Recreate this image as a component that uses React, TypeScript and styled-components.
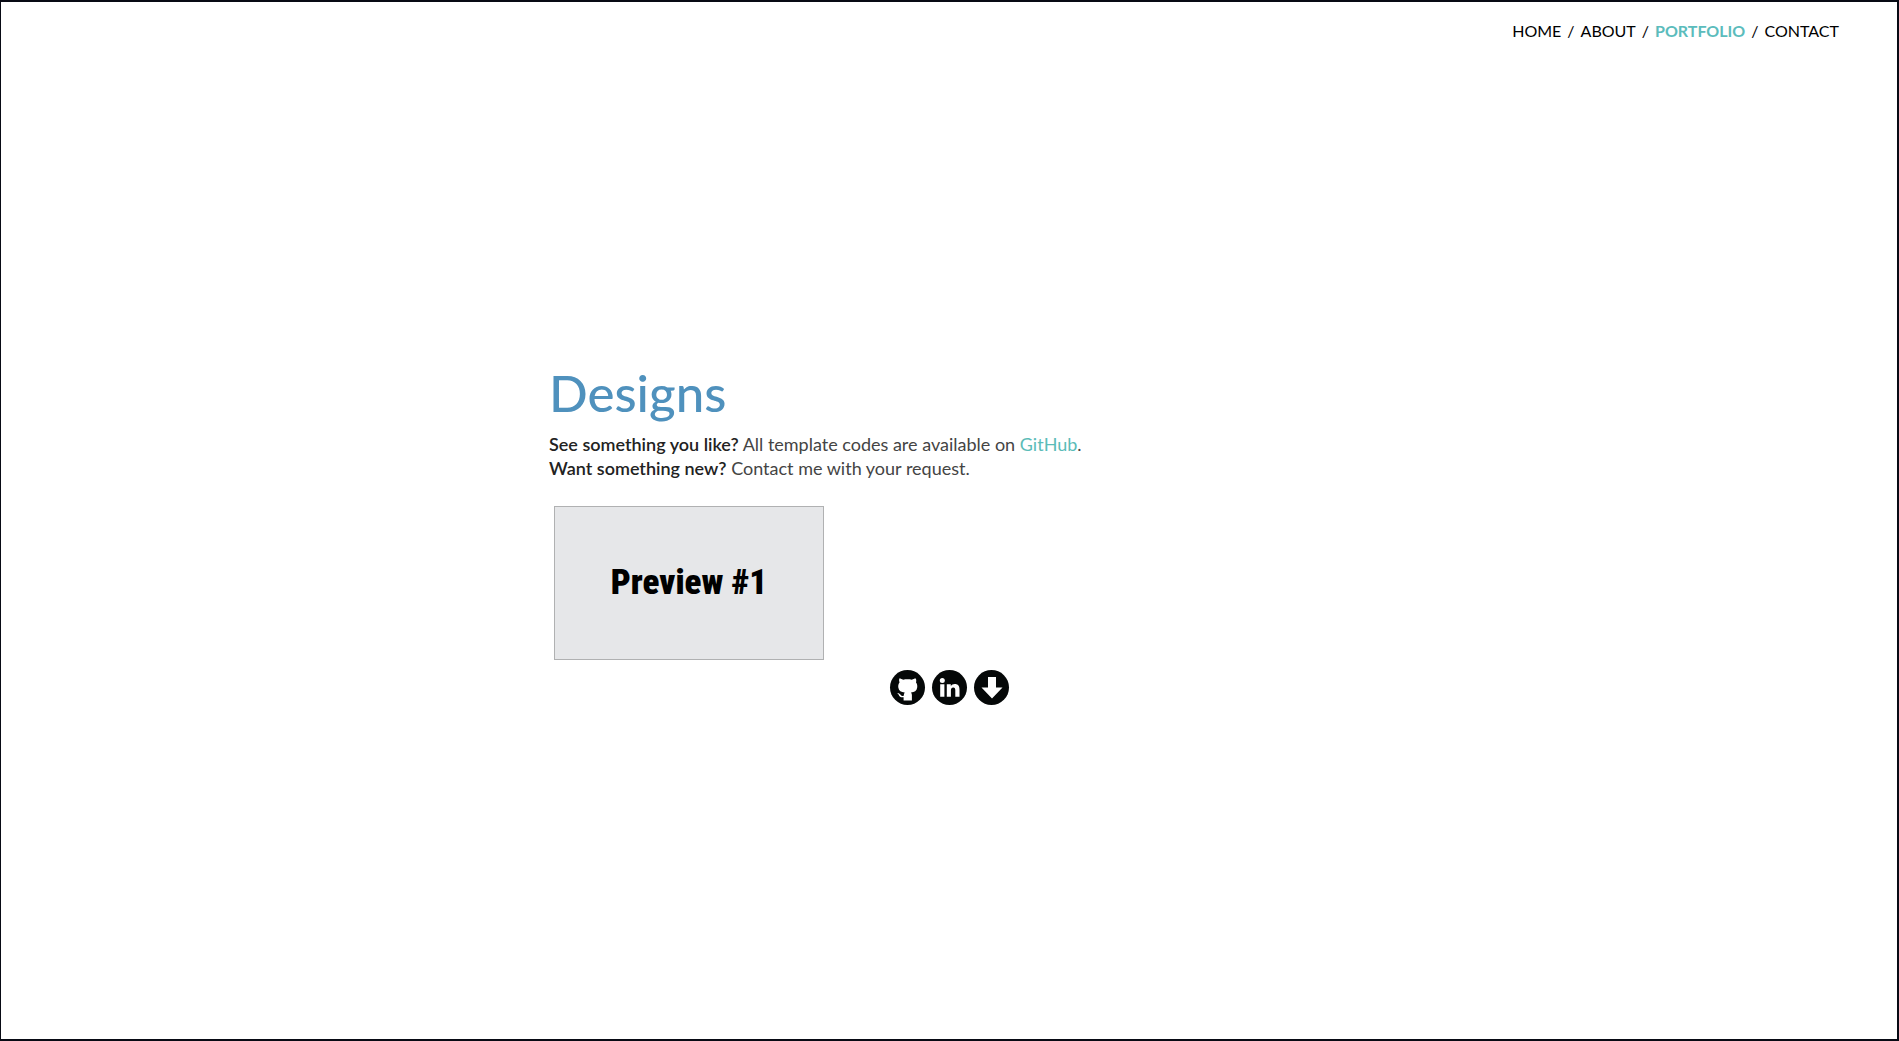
import React from "react";
import styled, { createGlobalStyle, css } from "styled-components";

const GlobalStyle = createGlobalStyle`
  *, *::before, *::after { box-sizing: border-box; }
  body {
    margin: 0;
    background: #fff;
    color: #444;
    font-family: Lato, "Liberation Sans", sans-serif;
    font-size: 18px;
    line-height: 24px;
  }
`;

const Page = styled.div`
  display: flex;
  flex-direction: column;
  min-height: 100vh;
  border: 2px solid #080a14;
  border-left-width: 1px;
`;

const Nav = styled.nav`
  display: flex;
  justify-content: flex-end;
  padding: 17px 58px 18px;
`;

const NavList = styled.ul`
  display: flex;
  margin: 0;
  padding: 0;
  list-style: none;
  color: #000;
  font-size: 16px;

  li + li::before {
    content: "/";
    padding: 0 6px;
  }
`;

const NavLink = styled.a<{ $active?: boolean }>`
  color: #000;
  text-decoration: none;
  ${(p) =>
    p.$active &&
    css`
      color: #5bbcbc;
      font-weight: 700;
    `}
`;

const Main = styled.main`
  display: flex;
  flex: 1;
  flex-direction: column;
  justify-content: center;
  width: 100%;
  max-width: 800px;
  margin: 0 auto;
  padding-bottom: 32px;
`;

const Title = styled.h1`
  margin: 0 0 10px;
  color: #4f91bd;
  font-size: 51px;
  font-weight: 500;
  line-height: 58px;
`;

const Intro = styled.p`
  margin: 0;
  font-weight: 400;
`;

const Lead = styled.strong`
  color: #222;
  font-weight: 600;
`;

const TextLink = styled.a`
  color: #5bbcb8;
  text-decoration: none;
`;

const Gallery = styled.div`
  display: flex;
  flex-wrap: wrap;
  gap: 10px;
  padding: 26px 5px 10px;
`;

const Preview = styled.a`
  display: flex;
  align-items: center;
  justify-content: center;
  width: 270px;
  height: 154px;
  border: 1px solid #b0b1b2;
  background: #e6e7e9;
  color: #000;
  font-family: "Roboto Condensed", Roboto, sans-serif;
  font-size: 35px;
  font-weight: 900;
  text-decoration: none;
`;

const Social = styled.footer`
  display: flex;
  justify-content: center;
  gap: 7px;
`;

const SocialLink = styled.a`
  display: block;
  width: 35px;
  height: 35px;
  border-radius: 50%;
  background: #050808;

  svg {
    display: block;
    width: 100%;
    height: 100%;
    fill: #fff;
  }
`;

const pages = ["HOME", "ABOUT", "PORTFOLIO", "CONTACT"];

export default function App() {
  return (
    <>
      <GlobalStyle />
      <Page>
        <Nav aria-label="Main">
          <NavList>
            {pages.map((page) => (
              <li key={page}>
                <NavLink href={`#${page.toLowerCase()}`} $active={page === "PORTFOLIO"}>
                  {page}
                </NavLink>
              </li>
            ))}
          </NavList>
        </Nav>
        <Main>
          <Title>Designs</Title>
          <Intro>
            <Lead>See something you like?</Lead> All template codes are available on{" "}
            <TextLink href="#github">GitHub</TextLink>.
            <br />
            <Lead>Want something new?</Lead> Contact me with your request.
          </Intro>
          <Gallery>
            <Preview href="#preview-1">Preview #1</Preview>
          </Gallery>
          <Social>
            <SocialLink href="#github" aria-label="GitHub">
              <svg viewBox="0 0 35 35">
                <path d="M9.2 8.4c1.5 0 2.8.6 3.9 1.3 2.800-.6 6-.6 8.800 0 1.100-.7 2.400-1.300 3.900-1.300.6 1.400.6 2.800.2 4.100 1.100 1.400 1.500 3 1.200 5-.5 3.300-2.800 4.700-6.200 5.100.6.7.9 1.500.9 2.500v5.300h-8.300v-3.200c-2.800.5-4-.6-4.800-2.300-.4-.9-.9-1.400-1.700-1.900 1.800-.4 2.800.8 3.600 1.900.7 1 1.700 1.200 3 .8.100-1.200.4-2.300 1-3.100-3.500-.4-5.900-1.800-6.400-5.100-.3-2 .2-3.600 1.200-5-.5-1.300-.5-2.700-.3-4.100z" />
              </svg>
            </SocialLink>
            <SocialLink href="#linkedin" aria-label="LinkedIn">
              <svg viewBox="0 0 35 35">
                <circle cx="10.300" cy="10.500" r="2.500" />
                <path d="M8.200 14.300h4.200v12.500H8.200zM14.800 14.300h4v1.700c.9-1.300 2.200-2 4-2 3.400 0 4.700 2.100 4.700 5.700v7.100h-4.200v-6.500c0-1.900-.5-2.900-2-2.900-1.600 0-2.400 1.100-2.400 3v6.400h-4.100z" />
              </svg>
            </SocialLink>
            <SocialLink href="#resume" aria-label="Download resume">
              <svg viewBox="0 0 35 35">
                <path d="M14 7h8v10.500h6.500L18 28.500 7.500 17.500H14z" />
              </svg>
            </SocialLink>
          </Social>
        </Main>
      </Page>
    </>
  );
}
